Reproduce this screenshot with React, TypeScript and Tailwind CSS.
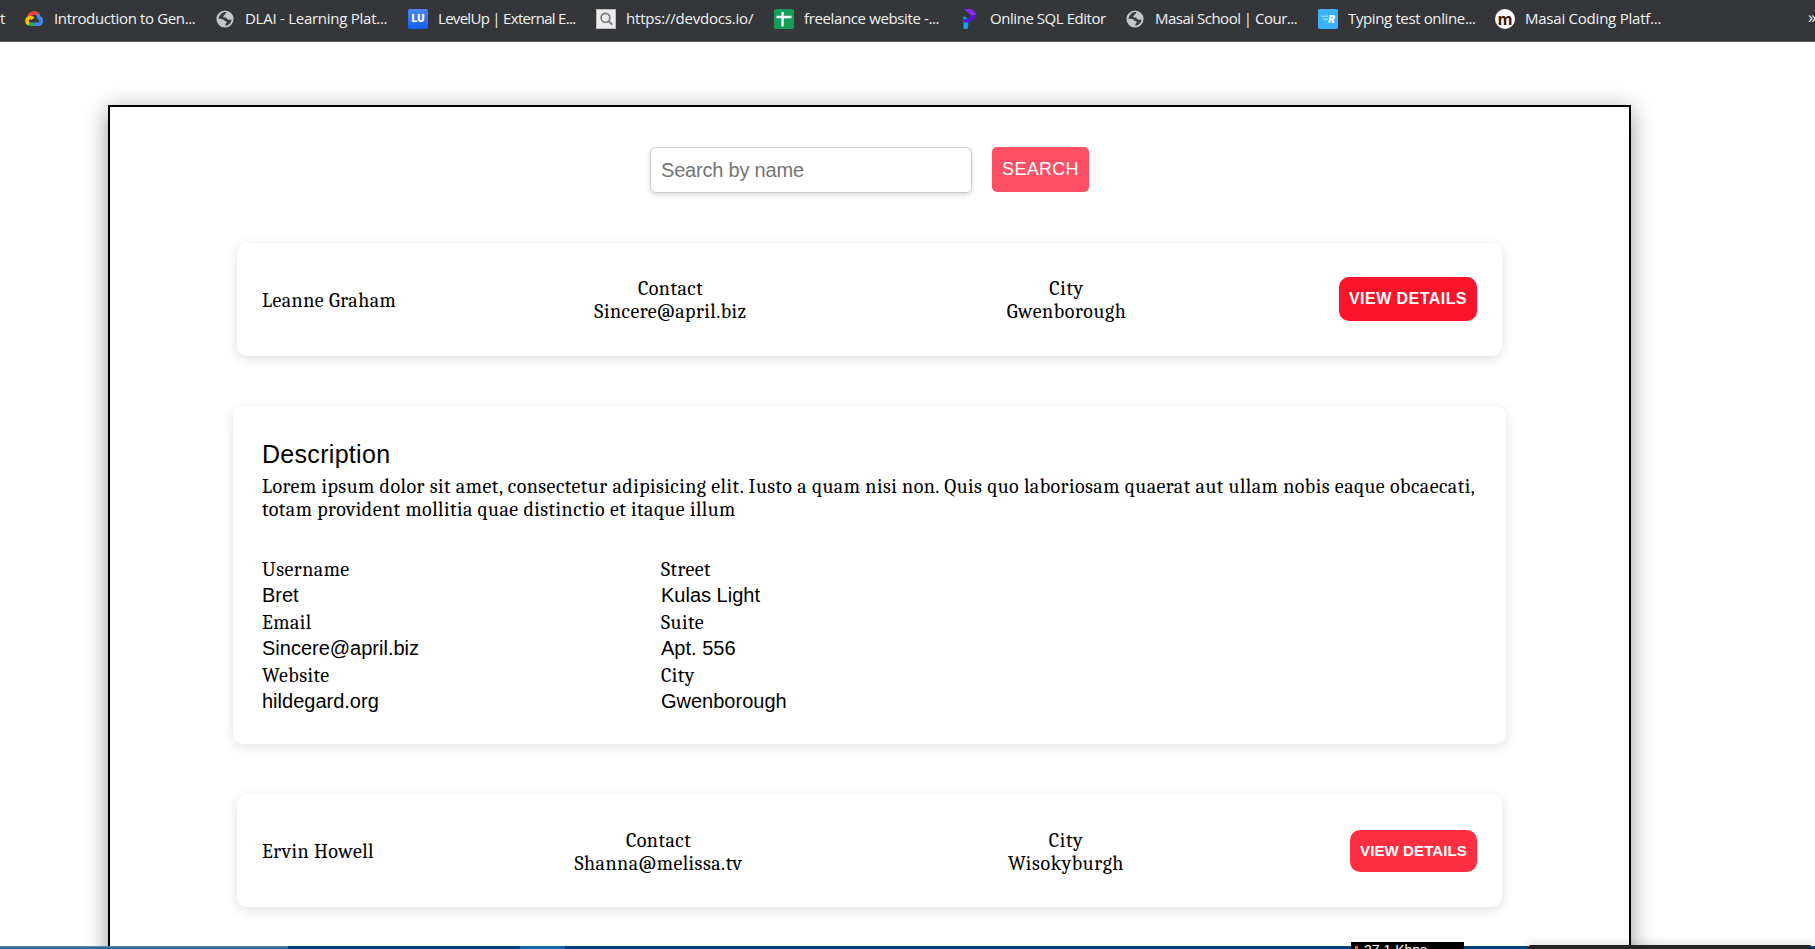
import React from "react";

const GlobeIcon = () => (
  <svg viewBox="0 0 20 20" className="size-5">
    <circle cx="10" cy="10" r="8.6" fill="#c3c6ca" />
    <path d="M5 6.2c1.6-2.8 4-3.6 6.400-3.200-.6 1-.2 1.700-1.400 2.200-.9.500-.7 1.500-1.700 1.700-.5 1.200 1 1.300 2.400 1.600 1.300.4 1.200 1.900 2.600 2.200 1.200.3 2.300.1 3.300-.2-.4 3.500-3 5.900-6.200 6.300.2-1.200-.2-2 .8-2.600.8-.7.400-1.700-.6-2-1.200-.3-1.600-1.400-2.800-1.900-1.500-.5-3.200-.4-4.300-.6.100-1.300.700-2.500 1.500-3.500z" fill="#3a3b3f" />
  </svg>
);

const CloudIcon = () => (
  <svg viewBox="0 0 20 20" className="size-5" fill="none" strokeWidth="3.600">
    <path d="M5 7.400A5.300 5.300 0 0 1 14.600 6.600" stroke="#ea4335" />
    <path d="M13.600 5.500c1 1 1.300 2 1.300 3.200a3.400 3.400 0 0 1-.6 6.600H10" stroke="#4285f4" />
    <path d="M10.500 15.300H6.200c-.8 0-1.300-.2-1.800-.5" stroke="#34a853" />
    <path d="M4.800 15a3.500 3.500 0 0 1 1.200-6.500c1.400-.1 2.400.5 3 1.300" stroke="#fbbc05" />
  </svg>
);

const LevelIcon = () => (
  <span className="flex size-5 items-center justify-center rounded-[2px] bg-gradient-to-b from-[#4a86ee] to-[#0b5ffb] font-['Inter'] text-[10px] font-black text-white">LU</span>
);

const SearchPageIcon = () => (
  <svg viewBox="0 0 20 20" className="size-5">
    <rect x=".5" y=".5" width="19" height="19" fill="#ececec" stroke="#bdbdbd" />
    <circle cx="9.500" cy="8.800" r="4.400" fill="none" stroke="#777" strokeWidth="1.600" />
    <path d="M12.600 12l3.400 3.600" stroke="#777" strokeWidth="2" />
  </svg>
);

const SheetIcon = () => (
  <svg viewBox="0 0 20 20" className="size-5">
    <rect width="20" height="20" rx="2" fill="#129d58" />
    <path d="M2.500 8h15M8.600 3v14.500" stroke="#fff" strokeWidth="2.400" fill="none" />
  </svg>
);

const SqlIcon = () => (
  <svg viewBox="0 0 20 20" className="size-5">
    <path d="M3.500 7l4.800 3v6L7.500 20h-4z" fill="#12a5f4" />
    <path d="M3.500 0h8l4.500 4.500v3.500l-3 0-4-3.500z" fill="#8a2bf2" />
    <path d="M16 5.500V8.500L8 13.500 3.500 13.500V10.500l5-1 3.500-3z" fill="#5a0ef0" />
  </svg>
);

const TypingIcon = () => (
  <span className="flex size-5 items-center justify-center rounded-[2px] bg-[#39b1fb]">
    <svg viewBox="0 0 8 8" className="mb-0.5 h-2 w-[7px]"><path d="M0 2h8M2 5.500h6" stroke="#7fe0ff" strokeWidth="1.800" /></svg>
    <span className="font-['Inter'] text-[10px] leading-none font-black text-white italic">R</span>
  </span>
);

const MasaiIcon = () => (
  <span className="flex size-5 items-center justify-center rounded-full bg-white font-['Inter'] text-[16px] leading-[18px] font-bold text-[#3b1508]">m</span>
);

const bookmarks = [
  { icon: <CloudIcon />, label: "Introduction to Gen...", box: "w-[191px]", track: "tracking-[-0.36px]" },
  { icon: <GlobeIcon />, label: "DLAI - Learning Plat...", box: "w-[193px]", track: "tracking-[-0.26px]" },
  { icon: <LevelIcon />, label: "LevelUp | External E...", box: "w-[188px]", track: "tracking-[-0.7px]" },
  { icon: <SearchPageIcon />, label: "https://devdocs.io/", box: "w-[178px]", track: "tracking-[-0.2px]" },
  { icon: <SheetIcon />, label: "freelance website -...", box: "w-[186px]", track: "tracking-[-0.37px]" },
  { icon: <SqlIcon />, label: "Online SQL Editor", box: "w-[165px]", track: "tracking-[-0.45px]" },
  { icon: <GlobeIcon />, label: "Masai School | Cour...", box: "w-[193px]", track: "tracking-[-0.5px]" },
  { icon: <TypingIcon />, label: "Typing test online...", box: "w-[177px]", track: "tracking-[-0.37px]" },
  { icon: <MasaiIcon />, label: "Masai Coding Platf...", box: "w-[313px]", track: "tracking-[-0.23px]" },
];

function BookmarksBar() {
  return (
    <header className="flex h-[42px] shrink-0 overflow-hidden border-b border-[#5b5c60] bg-[#35363a] pb-1 font-['Open_Sans','Noto_Sans',sans-serif] text-[15px] whitespace-nowrap text-[#f1f3f4]">
      <div className="flex w-6 shrink-0 items-center">t</div>
      {bookmarks.map((b) => (
        <div key={b.label} className={`flex shrink-0 items-center gap-2.5 ${b.box}`}>
          {b.icon}
          <span className={`pb-px ${b.track}`}>{b.label}</span>
        </div>
      ))}
      <div className="flex items-center pb-1 text-[17px]">»</div>
    </header>
  );
}

const cardShadow = "shadow-[0_3px_12px_rgba(0,0,0,0.12)]";

type UserRowProps = { name: string; email: string; city: string; contactBox: string; cityBox: string; button: string };

function UserRow(p: UserRowProps) {
  return (
    <section className={`mx-[127px] flex h-[113px] items-center rounded-[10px] px-[25px] ${cardShadow}`}>
      <div className="w-[290px] pt-px">{p.name}</div>
      <div className={`text-center ${p.contactBox}`}>
        <div>Contact</div>
        <div>{p.email}</div>
      </div>
      <div className={`text-center ${p.cityBox}`}>
        <div>City</div>
        <div>{p.city}</div>
      </div>
      <button className={`ml-auto shrink-0 rounded-[10px] font-['Liberation_Sans',sans-serif] font-bold whitespace-nowrap text-white ${p.button}`}>VIEW DETAILS</button>
    </section>
  );
}

function Field({ label, value }: { label: string; value: string }) {
  return (
    <div className="h-[53px]">
      <div className="h-[24px] leading-[24px]">{label}</div>
      <div className="font-['Liberation_Sans',sans-serif] text-[20px] leading-[26px] tracking-normal">{value}</div>
    </div>
  );
}

export default function App() {
  return (
    <div className="relative flex h-[949px] w-[1815px] flex-col overflow-hidden bg-white text-black">
      <BookmarksBar />
      <main className="mt-[63px] ml-[108px] h-[900px] w-[1523px] shrink-0 border-2 border-black font-['Cambria','Caladea','Liberation_Serif',serif] text-[20px] leading-[23px] tracking-[0.46px] shadow-[0_5px_22px_rgba(0,0,0,0.4)]">
        <div className="mt-10 ml-[540px] flex h-[96px] items-start gap-5">
          <input
            placeholder="Search by name"
            className="h-[46px] w-[322px] rounded-[6px] border border-[#ccc] px-2.5 font-['Liberation_Sans',sans-serif] text-[20px] tracking-[-0.2px] shadow-[0_2px_5px_rgba(0,0,0,0.15)] placeholder:text-[#757575]"
          />
          <button className="h-[45px] w-[97px] rounded-[5px] bg-[#fd5065] font-['Liberation_Sans',sans-serif] text-[18px] tracking-[0.3px] text-white">SEARCH</button>
        </div>

        <UserRow name="Leanne Graham" email="Sincere@april.biz" city="Gwenborough" contactBox="pt-px w-[237px]" cityBox="pt-px ml-[159px] w-[237px] tracking-[0.6px]" button="mb-0.5 h-[44px] w-[138px] bg-[#fa132a] text-[16px] tracking-[0.45px]" />

        <section className={`mx-[123px] mt-[50px] h-[338px] rounded-[10px] px-[29px] pt-8 ${cardShadow}`}>
          <h2 className="font-['Liberation_Sans',sans-serif] text-[25px] leading-[32px] tracking-[0.3px]">Description</h2>
          <p className="mt-[5px] whitespace-nowrap">
            Lorem ipsum dolor sit amet, consectetur adipisicing elit. Iusto a quam nisi non. Quis quo laboriosam quaerat aut ullam nobis eaque obcaecati,
            <br />
            totam provident mollitia quae distinctio et itaque illum
          </p>
          <div className="mt-[37px] flex">
            <div className="w-[399px]">
              <Field label="Username" value="Bret" />
              <Field label="Email" value="Sincere@april.biz" />
              <Field label="Website" value="hildegard.org" />
            </div>
            <div>
              <Field label="Street" value="Kulas Light" />
              <Field label="Suite" value="Apt. 556" />
              <Field label="City" value="Gwenborough" />
            </div>
          </div>
        </section>

        <div className="mt-[50px]">
          <UserRow name="Ervin Howell" email="Shanna@melissa.tv" city="Wisokyburgh" contactBox="pt-[3px] w-[213px]" cityBox="pt-[3px] ml-[183px] w-[236px] tracking-[0.6px]" button="h-[42px] w-[127px] bg-[#ff2e43] text-[15px] tracking-[0.1px]" />
        </div>
      </main>

      <footer className="absolute bottom-0 left-0 flex h-[7px] w-full items-end">
        <div className="h-[3px] w-[288px] border-t border-[#5d8db0] bg-[#2d6795]" />
        <div className="h-[3px] w-[232px] bg-[#00437a]" />
        <div className="h-[3px] w-[45px] bg-[#1565a8]" />
        <div className="h-[3px] w-[786px] bg-[#00437a]" />
        <div className="flex h-[7px] w-[113px] gap-1.5 overflow-hidden bg-black pl-1">
          <div className="mt-1 h-1 w-[3px] bg-[#ff5a00]" />
          <div className="font-['Liberation_Sans',sans-serif] text-[14px] leading-[17px] text-white">27.1 Kbps</div>
        </div>
        <div className="h-[3px] w-[64px] bg-[#00437a]" />
        <div className="h-1 w-[284px] rounded-t-[3px] bg-[#222426] shadow-[0_0_10px_rgba(0,0,0,0.3)]" />
        <div className="h-[3px] w-[3px] bg-[#00437a]" />
      </footer>
    </div>
  );
}
